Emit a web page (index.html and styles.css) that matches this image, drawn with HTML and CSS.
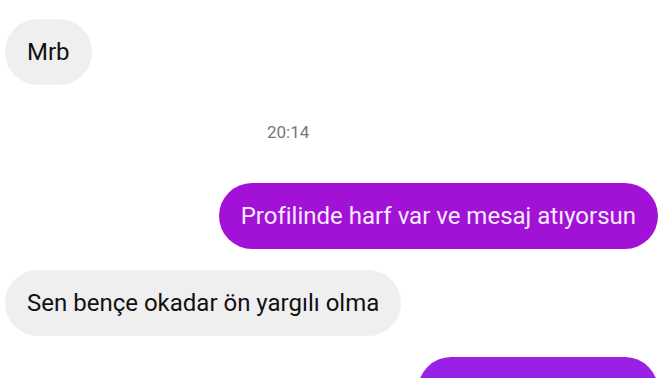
FILE: index.html
```html
<!DOCTYPE html>
<html lang="tr">

<head>
  <meta charset="UTF-8">
  <meta name="viewport" content="width=device-width, initial-scale=1.0">
  <title>Sohbet</title>
  <link rel="stylesheet" href="styles.css">
</head>

<body>
  <div class="chat">
    <div class="msg in">Mrb</div>
    <div class="time">20:14</div>
    <div class="msg out">Profilinde harf var ve mesaj atıyorsun</div>
    <div class="msg in">Sen bençe okadar ön yargılı olma</div>
    <div class="msg out last"></div>
  </div>
</body>

</html>
```

FILE: styles.css
```css
* {
  padding: 0;
  margin: 0;
  box-sizing: border-box;
}

body {
  font-family: Roboto, "Noto Sans", sans-serif;
  background: #fff;
  overflow: hidden;
}

.chat {
  display: flex;
  flex-direction: column;
  padding: 19px 14px 0 5px;
}

.msg {
  height: 66px;
  line-height: 66px;
  padding: 0 22px;
  border-radius: 33px;
  font-size: 24px;
  white-space: nowrap;
}

.in {
  align-self: flex-start;
  background: #efefef;
  color: #111;
}

.out {
  align-self: flex-end;
  background: #a112d6;
  color: #f7eaff;
}

.last {
  background: #9a20e6;
  width: 240px;
}

.time {
  padding: 37px 0 40px 262px;
  font-size: 17px;
  color: #777;
  line-height: 21px;
}

.msg + .msg {
  margin-top: 21px;
}
```
